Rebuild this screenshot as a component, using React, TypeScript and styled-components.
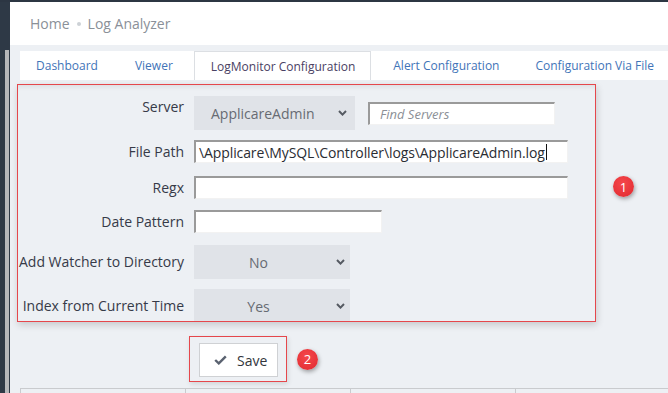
import React from "react";
import styled, { createGlobalStyle } from "styled-components";

const Global = createGlobalStyle`
  html, body { margin: 0; padding: 0; overflow: hidden; background: #edf0f4; }
  body { font-family: "Open Sans", "Liberation Sans", sans-serif; }
  * { box-sizing: border-box; }
`;

const Page = styled.div`
  display: flex;
  width: 668px;
  height: 393px;
  overflow: hidden;
  border-top: 2px solid #2c3643;
`;

const Sidebar = styled.div`
  width: 10px;
  flex: none;
  background: #2e3946;
  display: flex;
  padding: 48px 0 0 5px;
`;

const SideStrip = styled.div`
  width: 4px;
  background: #b5b7ba;
`;

const Main = styled.div`
  flex: 1;
  display: flex;
  flex-direction: column;
  background: #edf0f4;
  min-width: 0;
`;

const Header = styled.div`
  height: 43px;
  flex: none;
  background: #ffffff;
  display: flex;
  align-items: center;
  padding-left: 20px;
  font-size: 14px;
  color: #8a9098;
`;

const Dot = styled.span`
  width: 4px;
  height: 4px;
  border-radius: 50%;
  background: #cdd1d6;
  margin: 0 7px 0 7px;
`;

const Content = styled.div`
  padding: 6px 0 0 7px;
  display: flex;
  flex-direction: column;
`;

const TabBar = styled.div`
  height: 29px;
  margin-left: 3px;
  background: #ffffff;
  display: flex;
`;

const Tab = styled.div<{ $active?: boolean; $pl: number; $pr: number }>`
  display: flex;
  align-items: center;
  font-size: 12px;
  white-space: nowrap;
  padding: 0 ${(p) => p.$pr}px 0 ${(p) => p.$pl}px;
  color: ${(p) => (p.$active ? "#4a4163" : "#3f74b8")};
  border-style: solid;
  border-color: #dcdfe3;
  border-width: ${(p) => (p.$active ? "1px 1px 0 1px" : "0")};
`;

const PanelRow = styled.div`
  display: flex;
  align-items: flex-start;
  margin-top: 4px;
`;

const Panel = styled.div`
  width: 579px;
  height: 238px;
  flex: none;
  border: 1px solid #e5474c;
  background: #edf0f4;
  box-shadow: 1px 3px 7px rgba(0, 0, 0, 0.16), inset 0 5px 5px -3px rgba(0, 0, 0, 0.07);
  padding-top: 11px;
  overflow: hidden;
`;

const Row = styled.div<{ $mt: number; $top?: boolean }>`
  display: grid;
  grid-template-columns: 166px 1fr;
  column-gap: 10px;
  align-items: ${(p) => (p.$top ? "start" : "center")};
  margin-top: ${(p) => p.$mt}px;
`;

const Label = styled.div<{ $top?: boolean }>`
  text-align: right;
  font-size: 14px;
  line-height: 19px;
  color: #363a48;
  white-space: nowrap;
  padding-top: ${(p) => (p.$top ? "1px" : "0")};
  margin-top: ${(p) => (p.$top ? "0" : "-1px")};
`;

const Controls = styled.div`
  display: flex;
  align-items: center;
  gap: 13px;
`;

const Select = styled.div<{ $w: number; $center?: boolean }>`
  width: ${(p) => p.$w}px;
  height: 34px;
  background: #e0e3e8;
  display: flex;
  align-items: center;
  font-size: 14px;
  color: #676b73;
  padding: ${(p) => (p.$center ? "0 5px 0 0" : "0 8px 0 17px")};
`;

const SelectValue = styled.span<{ $center?: boolean }>`
  flex: 1;
  text-align: ${(p) => (p.$center ? "center" : "left")};
`;

const Chevron = styled.svg<{ $gap: number }>`
  width: 9px;
  height: 6px;
  margin-left: ${(p) => p.$gap}px;
  flex: none;
`;

const TextInput = styled.input<{ $w: number; $italic?: boolean }>`
  width: ${(p) => p.$w}px;
  height: 23px;
  background: #ffffff;
  border-style: solid;
  border-width: 2px 1px 1px 2px;
  border-color: #9a9a9a #f2f2f2 #f2f2f2 #9a9a9a;
  padding: 0 0 0 ${(p) => (p.$italic ? "10px" : "3px")};
  font-family: "Open Sans", "Liberation Sans", sans-serif;
  font-size: 13px;
  color: #2a2d33;
  outline: none;
  &::placeholder {
    color: #8b8f96;
    font-style: italic;
  }
`;

const FieldBox = styled.div<{ $w: number }>`
  width: ${(p) => p.$w}px;
  height: 23px;
  background: #ffffff;
  border-style: solid;
  border-width: 2px 1px 1px 2px;
  border-color: #9a9a9a #f2f2f2 #f2f2f2 #9a9a9a;
  padding-left: 3px;
  display: flex;
  align-items: center;
  font-size: 14px;
  letter-spacing: -0.1px;
  color: #2a2d33;
  white-space: nowrap;
  overflow: hidden;
`;

const Caret = styled.span`
  display: inline-block;
  width: 1px;
  height: 16px;
  background: #111;
  margin-left: 1px;
`;

const Badge = styled.div<{ $ml: number; $mt?: number }>`
  width: 21px;
  height: 21px;
  border-radius: 50%;
  flex: none;
  background: radial-gradient(circle at 45% 35%, #f5474b, #e0292f);
  color: #ffffff;
  font-size: 13px;
  display: flex;
  align-items: center;
  justify-content: center;
  margin-left: ${(p) => p.$ml}px;
  margin-top: ${(p) => p.$mt ?? 0}px;
  box-shadow: 1px 2px 4px rgba(0, 0, 0, 0.35);
`;

const SaveRow = styled.div`
  display: flex;
  align-items: center;
  margin: 14px 0 0 172px;
`;

const AnnotBox = styled.div`
  border: 1px solid #e5474c;
  padding: 6px 8px 4px 9px;
  box-shadow: 1px 2px 5px rgba(0, 0, 0, 0.12);
`;

const Button = styled.button`
  width: 79px;
  height: 34px;
  background: #ffffff;
  border: 1px solid #cfd1d4;
  display: flex;
  align-items: center;
  padding: 0 0 0 14px;
  gap: 10px;
  font-family: "Open Sans", "Liberation Sans", sans-serif;
  font-size: 14px;
  color: #33363c;
`;

const Table = styled.div`
  display: flex;
  margin: 6px 0 0 3px;
  border-top: 1px solid #c9cbce;
`;

const Cell = styled.div`
  width: 165px;
  height: 20px;
  flex: none;
  border-left: 1px solid #c9cbce;
`;

const ChevronIcon = ({ gap }: { gap: number }) => (
  <Chevron $gap={gap} viewBox="0 0 9 6">
    <polyline points="1,1 4.5,4.6 8,1" fill="none" stroke="#555a62" strokeWidth="2" />
  </Chevron>
);

export default function App() {
  return (
    <>
      <Global />
      <Page>
        <Sidebar>
          <SideStrip />
        </Sidebar>
        <Main>
          <Header>
            <span>Home</span>
            <Dot />
            <span>Log Analyzer</span>
          </Header>
          <Content>
            <TabBar>
              <Tab $pl={16} $pr={19}>Dashboard</Tab>
              <Tab $pl={18} $pr={21}>Viewer</Tab>
              <Tab $active $pl={16} $pr={15}>LogMonitor Configuration</Tab>
              <Tab $pl={22} $pr={18}>Alert Configuration</Tab>
              <Tab $pl={18} $pr={0}>Configuration Via File</Tab>
            </TabBar>
            <PanelRow>
              <Panel>
                <Row $mt={0} $top>
                  <Label $top>Server</Label>
                  <Controls>
                    <Select $w={161}>
                      <SelectValue>ApplicareAdmin</SelectValue>
                      <ChevronIcon gap={0} />
                    </Select>
                    <TextInput $w={187} $italic placeholder="Find Servers" />
                  </Controls>
                </Row>
                <Row $mt={10}>
                  <Label>File Path</Label>
                  <FieldBox $w={374}>
                    \Applicare\MySQL\Controller\logs\ApplicareAdmin.log
                    <Caret />
                  </FieldBox>
                </Row>
                <Row $mt={13}>
                  <Label>Regx</Label>
                  <TextInput $w={374} />
                </Row>
                <Row $mt={11}>
                  <Label>Date Pattern</Label>
                  <TextInput $w={188} />
                </Row>
                <Row $mt={12}>
                  <Label>Add Watcher to Directory</Label>
                  <Select $w={156} $center>
                    <SelectValue $center>No</SelectValue>
                    <ChevronIcon gap={13} />
                  </Select>
                </Row>
                <Row $mt={10}>
                  <Label>Index from Current Time</Label>
                  <Select $w={156} $center>
                    <SelectValue $center>Yes</SelectValue>
                    <ChevronIcon gap={13} />
                  </Select>
                </Row>
              </Panel>
              <Badge $ml={17} $mt={92}>1</Badge>
            </PanelRow>
            <SaveRow>
              <AnnotBox>
                <Button>
                  <svg width="13" height="10" viewBox="0 0 13 10">
                    <path d="M1.2 5 L4.8 8.4 L11.8 1.4" fill="none" stroke="#5a6270" strokeWidth="2.4" />
                  </svg>
                  Save
                </Button>
              </AnnotBox>
              <Badge $ml={10}>2</Badge>
            </SaveRow>
            <Table>
              <Cell />
              <Cell />
              <Cell />
              <Cell />
            </Table>
          </Content>
        </Main>
      </Page>
    </>
  );
}
